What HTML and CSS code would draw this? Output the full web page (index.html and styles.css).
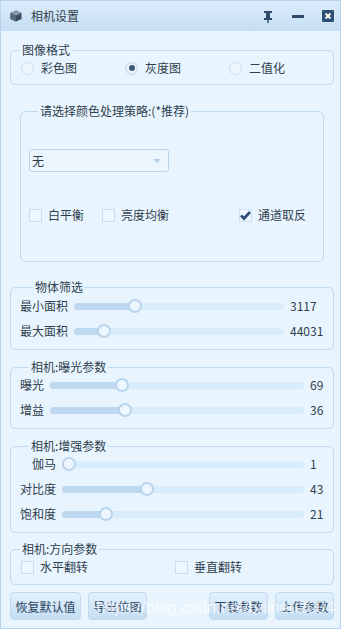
FILE: index.html
```html
<!DOCTYPE html>
<html lang="zh">
<head>
<meta charset="utf-8">
<title>相机设置</title>
<link rel="stylesheet" href="styles.css">
</head>
<body>
<div class="window">
  <div class="titlebar">
    <svg class="app-icon" width="12" height="12" viewBox="0 0 12 12">
      <polygon points="6,0.5 11.5,3 11.5,9 6,11.5 0.5,9 0.5,3" fill="#3b4a5c"/>
      <polygon points="6,0.5 11.5,3 6,5.5 0.5,3" fill="#8a9bb0"/>
      <polygon points="0.5,3 6,5.5 6,11.5 0.5,9" fill="#56677c"/>
    </svg>
    <span class="title">相机设置</span>
    <div class="title-tools">
      <svg class="pin" width="10" height="12" viewBox="0 0 10 12">
        <rect x="1" y="0" width="8" height="2" fill="#2e4a6b"/>
        <rect x="3" y="2" width="4" height="5" fill="#2e4a6b"/>
        <rect x="1" y="7" width="8" height="2" fill="#2e4a6b"/>
        <rect x="4.3" y="9" width="1.4" height="3" fill="#2e4a6b"/>
      </svg>
      <span class="minimize"></span>
      <svg class="close" width="12" height="12" viewBox="0 0 12 12">
        <rect x="0" y="0" width="12" height="12" rx="1" fill="#2f4f74"/>
        <path d="M3.5 3.5 L8.5 8.5 M8.5 3.5 L3.5 8.5" stroke="#ffffff" stroke-width="1.8"/>
      </svg>
    </div>
  </div>

  <div class="content">
    <fieldset class="group g-format">
      <legend>图像格式</legend>
      <div class="radio-row">
        <label class="radio"><span class="radio-dot"></span>彩色图</label>
        <label class="radio"><span class="radio-dot checked"></span>灰度图</label>
        <label class="radio"><span class="radio-dot"></span>二值化</label>
      </div>
    </fieldset>

    <fieldset class="group g-strategy">
      <legend>请选择颜色处理策略:(*推荐)</legend>
      <div class="combo"><span>无</span><span class="combo-arrow"></span></div>
      <div class="check-row">
        <label class="check"><span class="box"></span>白平衡</label>
        <label class="check"><span class="box"></span>亮度均衡</label>
        <label class="check check-right"><span class="box checked">
          <svg width="13" height="13" viewBox="0 0 13 13"><path d="M2 6.5 L5 9.5 L11 3" fill="none" stroke="#2f4f72" stroke-width="2.6"/></svg>
        </span>通道取反</label>
      </div>
    </fieldset>

    <fieldset class="group g-sliders g-object">
      <legend class="legend-wide">物体筛选</legend>
      <div class="slider-row">
        <span class="s-label">最小面积</span>
        <div class="track" style="--v:29.2%"><span class="fill"></span><span class="knob"></span></div>
        <span class="s-value">3117</span>
      </div>
      <div class="slider-row">
        <span class="s-label">最大面积</span>
        <div class="track" style="--v:14.4%"><span class="fill"></span><span class="knob"></span></div>
        <span class="s-value">44031</span>
      </div>
    </fieldset>

    <fieldset class="group g-sliders g-exposure">
      <legend>相机:曝光参数</legend>
      <div class="slider-row">
        <span class="s-label">曝光</span>
        <div class="track" style="--v:28.5%"><span class="fill"></span><span class="knob"></span></div>
        <span class="s-value">69</span>
      </div>
      <div class="slider-row">
        <span class="s-label">增益</span>
        <div class="track" style="--v:29.6%"><span class="fill"></span><span class="knob"></span></div>
        <span class="s-value">36</span>
      </div>
    </fieldset>

    <fieldset class="group g-sliders g-enhance">
      <legend>相机:增强参数</legend>
      <div class="slider-row">
        <span class="s-label">伽马</span>
        <div class="track" style="--v:2.7%"><span class="fill"></span><span class="knob"></span></div>
        <span class="s-value">1</span>
      </div>
      <div class="slider-row">
        <span class="s-label">对比度</span>
        <div class="track" style="--v:35.3%"><span class="fill"></span><span class="knob"></span></div>
        <span class="s-value">43</span>
      </div>
      <div class="slider-row">
        <span class="s-label">饱和度</span>
        <div class="track" style="--v:18.3%"><span class="fill"></span><span class="knob"></span></div>
        <span class="s-value">21</span>
      </div>
    </fieldset>

    <fieldset class="group g-direction">
      <legend>相机:方向参数</legend>
      <div class="dir-row">
        <label class="check"><span class="box"></span>水平翻转</label>
        <label class="check"><span class="box"></span>垂直翻转</label>
      </div>
    </fieldset>

    <div class="buttons">
      <button class="btn btn-wide">恢复默认值</button>
      <button class="btn">导出位图</button>
      <span class="spacer"></span>
      <button class="btn">下载参数</button>
      <button class="btn">上传参数</button>
      <span class="watermark">https://blog.csdn.net/baineu2004</span>
    </div>
  </div>
</div>
</body>
</html>
```

FILE: styles.css
```css
* { box-sizing: border-box; }

html, body {
  margin: 0;
  padding: 0;
  background: #ffffff;
}

body {
  font-family: "Noto Sans CJK SC", "Liberation Sans", sans-serif;
  font-size: 12px;
  color: #2f3e4e;
}

.window {
  width: 341px;
  height: 629px;
  border: 1px solid #b6d4ee;
  background: #e9f5fe;
  display: flex;
  flex-direction: column;
}

.titlebar {
  height: 30px;
  flex: none;
  display: flex;
  align-items: center;
  padding-left: 9px;
  background: linear-gradient(#dbecfa, #c5def3);
}

.app-icon { flex: none; }

.title {
  margin-left: 9px;
  line-height: 16px;
  color: #333f4c;
}

.title-tools {
  margin-left: auto;
  padding-right: 6px;
  display: flex;
  align-items: center;
}

.pin { margin-top: 1px; }

.minimize {
  display: block;
  width: 12px;
  height: 3px;
  background: #2e4a6b;
  margin-left: 19px;
}

.close { margin-left: 18px; }

.content {
  padding: 0 6px 0 9px;
  display: flex;
  flex-direction: column;
}

.group {
  margin: 0;
  padding: 0 0 8px 0;
  border: 1px solid #bed9f0;
  border-radius: 5px;
  min-width: 0;
}

.group legend {
  margin-left: 9px;
  padding: 0 2px;
  line-height: 16px;
  color: #2f3e4e;
}

.group .legend-wide { margin-left: 13px; }

.g-format { margin-top: 11px; padding-bottom: 6px; }

.radio-row {
  display: grid;
  grid-template-columns: repeat(3, 1fr);
  padding-left: 10px;
  height: 20px;
  align-items: center;
}

.radio, .check {
  display: flex;
  align-items: center;
  line-height: 16px;
  white-space: nowrap;
}

.radio-dot {
  width: 13px;
  height: 13px;
  border-radius: 50%;
  border: 1px solid #c7dcee;
  background: #eef7ff;
  margin-right: 7px;
  display: flex;
  align-items: center;
  justify-content: center;
}

.radio-dot.checked {
  border-color: #c3daee;
  box-shadow: inset 0 0 0 1px #dcebf7;
}

.radio-dot.checked::after {
  content: "";
  width: 6px;
  height: 6px;
  border-radius: 50%;
  background: #3c5878;
}

.g-strategy {
  margin: 18px 10px 0 10px;
  padding: 0 8px 0 8px;
}

.combo {
  margin-top: 30px;
  width: 140px;
  height: 23px;
  border: 1px solid #bad5ee;
  border-radius: 3px;
  background: #ebf6ff;
  display: flex;
  align-items: center;
  padding-left: 2px;
  padding-right: 7px;
  justify-content: space-between;
}

.combo-arrow {
  width: 0;
  height: 0;
  border-left: 4px solid transparent;
  border-right: 4px solid transparent;
  border-top: 4px solid #b6d0e9;
}

.check-row {
  margin-top: 33px;
  height: 20px;
  display: flex;
  align-items: center;
  margin-bottom: 36px;
  padding-right: 9px;
}

.check-row .check + .check { margin-left: 18px; }
.check-row .check-right { margin-left: auto !important; }

.box {
  width: 13px;
  height: 13px;
  border: 1px solid #c8ddef;
  background: #edf7ff;
  margin-right: 6px;
  display: flex;
  align-items: center;
  justify-content: center;
  flex: none;
}

.box.checked { border-color: #cfe1f1; }
.box svg { display: block; margin: -1px; }

.g-sliders {
  margin-top: 17px;
  padding-left: 9px;
}

.g-exposure, .g-enhance { margin-top: 9px; }

.slider-row {
  display: grid;
  align-items: center;
  height: 20px;
  column-gap: 6px;
  margin-bottom: 5px;
}

.slider-row:last-child { margin-bottom: 0; }

.g-object .slider-row { grid-template-columns: 48px 1fr 43px; }
.g-object .slider-row:first-of-type { margin-top: 1px; }
.g-exposure .slider-row { grid-template-columns: 24px 1fr 23px; }
.g-enhance .slider-row { grid-template-columns: 36px 1fr 23px; }
.g-enhance .s-label { text-align: right; }

.s-label, .s-value {
  line-height: 16px;
  white-space: nowrap;
}

.track {
  position: relative;
  height: 7px;
  border-radius: 4px;
  background: #d9ecfb;
}

.fill {
  position: absolute;
  left: 0;
  top: 0;
  bottom: 0;
  width: var(--v);
  border-radius: 4px;
  background: #bdd8ef;
}

.knob {
  position: absolute;
  top: 50%;
  left: var(--v);
  width: 14px;
  height: 14px;
  margin: -7px 0 0 -7px;
  border-radius: 50%;
  border: 2px solid #b9d5ed;
  background: #eef7ff;
}

.g-direction {
  margin-top: 8px;
  padding-bottom: 7px;
}

.dir-row {
  display: grid;
  grid-template-columns: 154px 1fr;
  padding-left: 10px;
  height: 20px;
  align-items: center;
}

.buttons {
  position: relative;
  margin-top: 7px;
  display: flex;
  gap: 7px;
}

.spacer { flex: 1; }

.btn {
  height: 28px;
  width: 59px;
  padding: 0;
  font-family: inherit;
  font-size: 12px;
  color: #2c4460;
  border: 1px solid #c1d9ef;
  border-radius: 4px;
  background: linear-gradient(#e3f1fd, #c4ddf4);
}

.btn-wide { width: 71px; }

.watermark {
  position: absolute;
  left: 86px;
  top: 5px;
  font-family: "Liberation Sans", sans-serif;
  font-size: 16.5px;
  line-height: 20px;
  color: rgba(255, 255, 255, 0.7);
  pointer-events: none;
  white-space: nowrap;
}
```
